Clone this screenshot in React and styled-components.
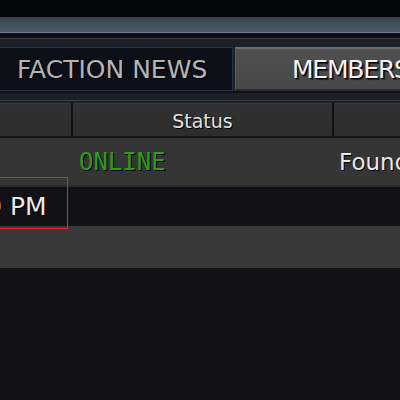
import React from "react";
import styled, { createGlobalStyle } from "styled-components";

const Global = createGlobalStyle`
  html, body { margin: 0; padding: 0; background: #121217; }
  body { width: 400px; height: 400px; overflow: hidden; font-family: "DejaVu Sans", sans-serif; }
`;

const Screen = styled.div`
  width: 400px;
  height: 400px;
  overflow: hidden;
  background: #121217;
  display: flex;
  flex-direction: column;
`;

const TopVoid = styled.div`
  height: 17px;
  background: #06070b;
  flex: none;
`;

const TitleBar = styled.div`
  height: 15px;
  flex: none;
  background: linear-gradient(#34424f, #45545f 60%, #4e5d69);
  border-bottom: 1px solid #6d7c8a;
`;

const Divider = styled.div`
  flex: none;
  height: 14px;
  background: #1b1f27;
  border-top: 5px solid #0c0e13;
  box-sizing: border-box;
  &::after {
    content: "";
    display: block;
    height: 1px;
    background: #3a3c40;
  }
`;

const TabRow = styled.div`
  flex: none;
  display: flex;
  gap: 2px;
  height: 44px;
  background: #1b1f27;
  overflow: hidden;
`;

const Tab = styled.div`
  flex: none;
  box-sizing: border-box;
  height: 44px;
  display: flex;
  align-items: center;
  font-family: "DejaVu Sans", sans-serif;
  font-size: 25px;
  white-space: nowrap;
  width: ${(p) => p.$width}px;
  padding-left: ${(p) => p.$pad}px;
  ${(p) =>
    p.$active
      ? `
    background: linear-gradient(#505050, #484848);
    border-top: 2px solid #6c6c6c;
    border-left: 1px solid #5c5c5c;
    border-bottom: 2px solid #2a2a2a;
    color: #f2f2f2;
    letter-spacing: -1.2px;
    text-shadow: 1px 1px 0 #000, 2px 2px 1px rgba(0,0,0,0.6);
  `
      : `
    background: #0c0f17;
    border: 1px solid #283049;
    border-left: none;
    color: #b4b4b4;
    text-shadow: 1px 1px 0 #000;
  `}
`;

const Gap = styled.div`
  flex: none;
  height: 12px;
  background: #1b1f27;
  border-top: 2px solid #0f1116;
  box-sizing: border-box;
  display: flex;
  flex-direction: column;
  justify-content: flex-end;
  &::before {
    content: "";
    height: 1px;
    background: #383b46;
    margin-bottom: 2px;
  }
`;

const Table = styled.div`
  flex: none;
  display: flex;
  flex-direction: column;
  margin-left: -80px;
  width: 640px;
  position: relative;
  background: #101218;
`;

const Row = styled.div`
  display: grid;
  grid-template-columns: 151px 259px 1fr;
  column-gap: ${(p) => (p.$header ? 2 : 0)}px;
  height: ${(p) => p.$h}px;
  background: ${(p) => (p.$header ? "#101218" : p.$bg)};
  border-bottom: ${(p) => (p.$header ? "2px solid #10131a" : "none")};
  border-top: ${(p) => (p.$divided ? "2px solid #2a2a2e" : "none")};
  box-sizing: border-box;
  align-items: stretch;
`;

const HeadCell = styled.div`
  background: linear-gradient(#313131, #2d2d2d);
  border-top: 1px solid #3a3a3a;
  display: flex;
  align-items: center;
  justify-content: center;
  font-family: "DejaVu Sans", sans-serif;
  font-size: 19px;
  color: #e2e2e2;
  text-shadow: 1px 1px 0 #000;
  padding-top: 2px;
`;

const Cell = styled.div`
  display: flex;
  align-items: center;
  padding-left: ${(p) => p.$pad || 0}px;
  white-space: nowrap;
  font-family: ${(p) => (p.$mono ? '"DejaVu Sans Mono", monospace' : '"DejaVu Sans", sans-serif')};
  font-size: ${(p) => p.$size || 23}px;
  color: ${(p) => p.$color || "#e8e8e8"};
  text-shadow: 1px 1px 0 #000;
`;

const Highlight = styled.div`
  position: absolute;
  z-index: 2;
  left: 0;
  top: 74px;
  width: 148px;
  height: 52px;
  box-shadow: inset 0 0 0 1px #f0202c;
  pointer-events: none;
`;

const rows = [
  { h: 47, bg: "#353535", status: "ONLINE", rank: "Found", time: "" },
  { h: 41, bg: "#111116", status: "", rank: "", time: "12:39 PM", divided: true },
  { h: 42, bg: "#383838", status: "", rank: "", time: "" },
];

export default function App() {
  return (
    <Screen>
      <Global />
      <TopVoid />
      <TitleBar />
      <Divider />
      <TabRow>
        <Tab $width={233} $pad={17}>FACTION NEWS</Tab>
        <Tab $active $width={400} $pad={56}>MEMBERS</Tab>
      </TabRow>
      <Gap />
      <Table>
        <Row $header $h={35}>
          <HeadCell />
          <HeadCell>Status</HeadCell>
          <HeadCell />
        </Row>
        {rows.map((r, i) => (
          <Row key={i} $h={r.h} $bg={r.bg} $divided={r.divided}>
            <Cell $pad={10} $size={25}>{r.time}</Cell>
            <Cell $pad={8} $mono $size={24} $color="#2f9a1c">{r.status}</Cell>
            <Cell $pad={9}>{r.rank}</Cell>
          </Row>
        ))}
        <Highlight />
      </Table>
    </Screen>
  );
}
